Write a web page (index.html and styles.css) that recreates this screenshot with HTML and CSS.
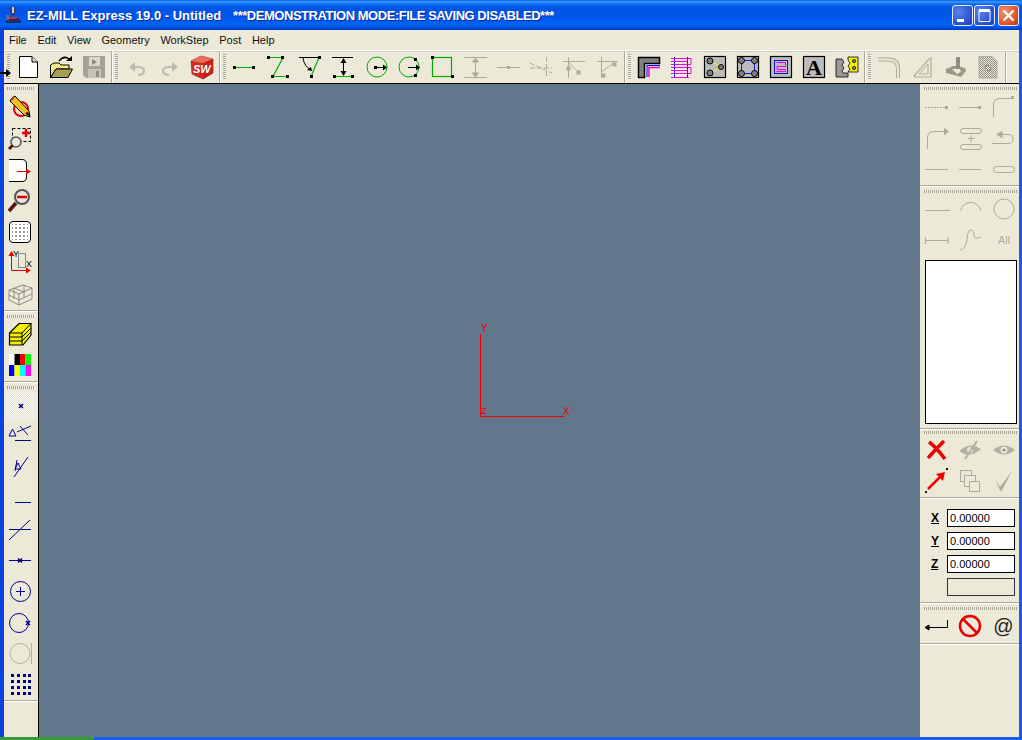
FILE: index.html
```html
<!DOCTYPE html>
<html lang="en">
<head>
<meta charset="utf-8">
<title>EZ-MILL Express 19.0</title>
<link rel="stylesheet" href="styles.css">
</head>
<body>
<svg class="defs" width="0" height="0">
  <defs>
    <pattern id="dots" width="4" height="4" patternUnits="userSpaceOnUse" x="1" y="1"><rect width="2" height="2" fill="#9a9a9a"/></pattern>
    <pattern id="dither" width="2" height="2" patternUnits="userSpaceOnUse"><rect width="2" height="2" fill="#ece9d8"/><rect width="1" height="1" fill="#8f8d80"/><rect x="1" y="1" width="1" height="1" fill="#8f8d80"/></pattern>
    <pattern id="ydither" width="2" height="2" patternUnits="userSpaceOnUse"><rect width="2" height="2" fill="#fff"/><rect width="1" height="1" fill="#f0e020"/><rect x="1" y="1" width="1" height="1" fill="#f0e020"/></pattern>
  </defs>
</svg>
<div class="window">
  <header class="titlebar">
    <svg class="appicon" width="18" height="18" viewBox="0 0 18 18"><path d="M5 1h6v4l-2 5H7L5 5z" fill="#39406a"/><path d="M7 1h2v6H7z" fill="#c9c9d6"/><path d="M1 15l3-3h9l3 3v2H1z" fill="#1d2a66"/><path d="M4 11h8v2H4z" fill="#c03030"/><path d="M1 9h3v5H1z" fill="#5a6a9a"/></svg>
    <span class="title-main">EZ-MILL Express 19.0 - Untitled</span>
    <span class="title-note">***DEMONSTRATION MODE:FILE SAVING DISABLED***</span>
    <div class="winbtns">
      <div class="winbtn"><svg width="21" height="21" viewBox="0 0 21 21"><rect x="5" y="14" width="7" height="3" fill="#fff"/></svg></div>
      <div class="winbtn"><svg width="21" height="21" viewBox="0 0 21 21"><path d="M5 5.5h11v11H5z" fill="none" stroke="#fff"/><rect x="5" y="4" width="11" height="3" fill="#fff"/></svg></div>
      <div class="winbtn winbtn-close"><svg width="21" height="21" viewBox="0 0 21 21"><path d="M5.5 5.5l10 10M15.5 5.5l-10 10" stroke="#fff" stroke-width="2.4"/></svg></div>
    </div>
  </header>
  <div class="frame">
    <nav class="menubar">
      <span>File</span><span>Edit</span><span>View</span><span>Geometry</span><span>WorkStep</span><span>Post</span><span>Help</span>
    </nav>
    <div class="toolbar">
      <div class="tgroup tgroup-first">
        <i class="grip"></i>
        <div class="tb"><svg width="28" height="28" viewBox="0 0 28 28"><path d="M4.5 3.5H17L22.5 9V24.5H4.5Z" fill="#fff" stroke="#000"/><path d="M17 3.5V9H22.5" fill="#ddd" stroke="#000"/></svg></div>
        <div class="tb"><svg width="28" height="28" viewBox="0 0 28 28"><path d="M2.5 24.5V12L6 10h5l2 2h8v4H8L2.5 24.5Z" fill="url(#ydither)" stroke="#000"/><path d="M2.5 24.5L8 16h16.5l-4.5 8.500Z" fill="#a8a050" stroke="#000"/><path d="M11 8Q16 2 21 6" fill="none" stroke="#000" stroke-width="1.500"/><path d="M18 8h6V3z"/></svg></div>
        <div class="tb"><svg width="28" height="28" viewBox="0 0 28 28"><path d="M2 3h22v22H5l-3-3z" fill="#a6a396"/><rect x="8" y="4" width="11" height="9" fill="#dcd9ca"/><path d="M11 6l5 3-5 3z" fill="#8f8d80"/><rect x="7" y="16" width="13" height="9" fill="#c8c5b6"/><rect x="15" y="18" width="3" height="6" fill="#8f8d80"/></svg></div>
      </div>
      <i class="tsep"></i>
      <div class="tgroup">
        <i class="grip"></i>
        <div class="tb"><svg width="28" height="28" viewBox="0 0 28 28"><path d="M10 14H15Q21 14 21 18T15 22" fill="none" stroke="#bdbaab" stroke-width="2"/><path d="M6 14l6-5v10z" fill="#bdbaab"/></svg></div>
        <div class="tb"><svg width="28" height="28" viewBox="0 0 28 28"><path d="M18 14H13Q7 14 7 18T13 22" fill="none" stroke="#bdbaab" stroke-width="2"/><path d="M22 14l-6-5v10z" fill="#bdbaab"/></svg></div>
        <div class="tb"><svg width="28" height="28" viewBox="0 0 28 28"><path d="M2 8L12 3l12 3v14l-10 6L3 21z" fill="#d42a20" stroke="#8a1a10" stroke-width=".6"/><path d="M2 8L12 3l12 3-10 4z" fill="#e8705a"/><path d="M14 10l10-4v14l-10 6z" fill="#c82018"/><text class="sw" x="4" y="20">SW</text></svg></div>
      </div>
      <i class="tsep"></i>
      <div class="tgroup">
        <i class="grip"></i>
        <div class="tb"><svg width="28" height="28" viewBox="0 0 28 28"><path d="M3 14.500H23" stroke="#00a800"/><rect x="2" y="13" width="3" height="3"/><rect x="21" y="13" width="3" height="3"/></svg></div>
        <div class="tb"><svg width="28" height="28" viewBox="0 0 28 28"><path d="M5 4.500H19L9 23.500H24" fill="none" stroke="#00b000" stroke-width="1.200"/><rect x="3" y="3" width="3" height="3"/><rect x="17" y="3" width="3" height="3"/><rect x="7" y="22" width="3" height="3"/><rect x="22" y="22" width="3" height="3"/></svg></div>
        <div class="tb"><svg width="28" height="28" viewBox="0 0 28 28"><path d="M2 4.500H22" stroke="#000"/><path d="M22 4.500L14 23.500" stroke="#00b000" stroke-width="1.200"/><path d="M6 5Q7 13 14 17" fill="none" stroke="#000"/><path d="M15 18l-5-1 4-3z"/><rect x="21" y="3" width="3" height="3"/><rect x="13" y="22" width="3" height="3"/></svg></div>
        <div class="tb"><svg width="28" height="28" viewBox="0 0 28 28"><path d="M2 4.500H23" stroke="#000"/><path d="M4 23.500H23" stroke="#00b000"/><path d="M13.500 8V20" stroke="#000"/><path d="M13.500 5l-3 5h6zM13.500 23l-3-5h6z"/><rect x="3" y="22" width="3" height="3"/><rect x="21" y="22" width="3" height="3"/></svg></div>
        <div class="tb"><svg width="28" height="28" viewBox="0 0 28 28"><circle cx="14" cy="14" r="10" fill="none" stroke="#00a800"/><rect x="11" y="13" width="3" height="3"/><path d="M13 14.500H23" stroke="#000"/><path d="M24 14.500l-4-3v6z"/></svg></div>
        <div class="tb"><svg width="28" height="28" viewBox="0 0 28 28"><circle cx="13" cy="14" r="10" fill="none" stroke="#00a800"/><rect x="18" y="5" width="3" height="3"/><rect x="18" y="21" width="3" height="3"/><path d="M12 14.500H23" stroke="#000"/><path d="M24 14.500l-4-3v6z"/></svg></div>
        <div class="tb"><svg width="28" height="28" viewBox="0 0 28 28"><rect x="3.500" y="4.500" width="19" height="19" fill="none" stroke="#00a800" stroke-width="1.200"/><rect x="2" y="3" width="3" height="3"/><rect x="22" y="22" width="3" height="3"/></svg></div>
        <div class="tb"><svg width="28" height="28" viewBox="0 0 28 28" fill="none" stroke="#aeab9c"><path d="M2 4.500H25M2 24.500H25M13.500 7V22"/><path d="M13.500 5l-3 4h6zM13.500 24l-3-4h6z" fill="#aeab9c"/></svg></div>
        <div class="tb"><svg width="28" height="28" viewBox="0 0 28 28"><path d="M2 14.500H25" stroke="#aeab9c"/><rect x="12" y="13" width="3" height="3" fill="#aeab9c"/></svg></div>
        <div class="tb"><svg width="28" height="28" viewBox="0 0 28 28" fill="none" stroke="#aeab9c"><path d="M2 10l22 10M18.500 4V25M2 15H24" stroke-dasharray="5 2"/></svg></div>
        <div class="tb"><svg width="28" height="28" viewBox="0 0 28 28" fill="none" stroke="#aeab9c"><path d="M7.500 4V25M2 8.500H24M7.500 9L17 19"/><rect x="6" y="14" width="3" height="3" fill="#aeab9c"/><rect x="16" y="18" width="3" height="3" fill="#aeab9c"/></svg></div>
        <div class="tb"><svg width="28" height="28" viewBox="0 0 28 28" fill="none" stroke="#aeab9c"><path d="M7.500 4V25M3 8.500H24M7 19L20 10"/><rect x="19" y="10" width="3" height="3" fill="#aeab9c"/><rect x="8" y="21" width="3" height="3" fill="#aeab9c"/></svg></div>
      </div>
      <i class="tsep"></i>
      <div class="tgroup">
        <i class="grip"></i>
        <div class="tb"><svg width="28" height="28" viewBox="0 0 28 28"><path d="M2.500 4.500H23.500V10.500H8.500V24.500H2.500Z" fill="#808080" stroke="#000" stroke-width="1.500"/><path d="M11 24V12.500H24" fill="none" stroke="#0000e0"/><path d="M13 24V14.500H24" fill="none" stroke="#f000f0" stroke-width="1.500"/></svg></div>
        <div class="tb"><svg width="28" height="28" viewBox="0 0 28 28" fill="none"><path d="M2 5.500H22V11.500H2M2 14.500H22V20.500H2M2 24.500H20" stroke="#f000f0"/><path d="M5.500 4V25M18.500 4V25" stroke="#2020e0"/><path d="M2 8.500H18M2 17.500H18" stroke="#f000f0"/></svg></div>
        <div class="tb"><svg width="28" height="28" viewBox="0 0 28 28"><rect x="2.500" y="3.500" width="21" height="21" fill="#bcbcbc" stroke="#000" stroke-width="1.200"/><path d="M8 8L19 14 8 20" fill="none" stroke="#f0f000"/><circle cx="8" cy="8" r="3" fill="#808080" stroke="#000"/><circle cx="19" cy="14" r="2.500" fill="#808080" stroke="#000"/><circle cx="8" cy="20" r="3" fill="#808080" stroke="#000"/></svg></div>
        <div class="tb"><svg width="28" height="28" viewBox="0 0 28 28"><rect x="2.500" y="3.500" width="21" height="21" fill="#bcbcbc" stroke="#000" stroke-width="1.200"/><rect x="6.500" y="7.500" width="13" height="13" fill="none" stroke="#1010e0"/><circle cx="6.500" cy="7.500" r="3" fill="#808080" stroke="#000"/><circle cx="19.500" cy="7.500" r="3" fill="#808080" stroke="#000"/><circle cx="6.500" cy="20.500" r="3" fill="#808080" stroke="#000"/><circle cx="19.500" cy="20.500" r="3" fill="#808080" stroke="#000"/></svg></div>
        <div class="tb"><svg width="28" height="28" viewBox="0 0 28 28"><rect x="2.500" y="3.500" width="21" height="21" fill="#bcbcbc" stroke="#000" stroke-width="1.200"/><rect x="6.500" y="7.500" width="13" height="13" fill="none" stroke="#1010e0"/><path d="M8.500 9.500H17.500V13.500H9V16.500H17.500V18.500H8.500" fill="none" stroke="#f000f0"/></svg></div>
        <div class="tb"><svg width="28" height="28" viewBox="0 0 28 28"><rect x="2.500" y="3.500" width="21" height="21" fill="#bcbcbc" stroke="#000" stroke-width="1.200"/><text class="big-a" x="13" y="22">A</text></svg></div>
        <div class="tb"><svg width="28" height="28" viewBox="0 0 28 28"><path d="M2 6h6l2 3-2 3 2 3-2 3 1 2h5v4H2z" fill="#9a9a9a" stroke="#000" stroke-width=".8"/><path d="M14 4h10v15H14l2-3-2-3 2-3-2-3z" fill="#f4f000" stroke="#000" stroke-width=".8"/><circle cx="20" cy="8" r="1.600" fill="#808080" stroke="#000" stroke-width=".7"/><circle cx="20" cy="15" r="1.600" fill="#808080" stroke="#000" stroke-width=".7"/></svg></div>
      </div>
      <i class="tsep"></i>
      <div class="tgroup tgroup-last">
        <i class="grip"></i>
        <div class="tb"><svg width="28" height="28" viewBox="0 0 28 28" fill="none"><path d="M4 6.500H15Q24 6.500 24 16V25" stroke="#aeab9c" stroke-width="4"/><path d="M4 6.500H15Q24 6.500 24 16V25" stroke="#ece9d8" stroke-width="2"/></svg></div>
        <div class="tb"><svg width="28" height="28" viewBox="0 0 28 28" fill="none" stroke="#b0ad9e"><path d="M7 23L23 5h1V24H8z" stroke-width="1.200"/><path d="M12 21L21 11V21z"/></svg></div>
        <div class="tb"><svg width="28" height="28" viewBox="0 0 28 28"><path d="M6 16l7-3h4l8 2 1 3-5 6-7-2-8-2z" fill="#9a9789"/><rect x="16" y="4" width="4" height="12" fill="#8f8d80"/><path d="M12 16h8l1 3-4 2z" fill="#ece9d8"/></svg></div>
        <div class="tb"><svg width="28" height="28" viewBox="0 0 28 28"><path d="M6 3.500H19L24 8V25H6z" fill="url(#dither)" stroke="#aeab9c"/><circle cx="15" cy="15" r="3" fill="none" stroke="#8f8d80"/></svg></div>
      </div>
      <i class="tsep tsep-end"></i>
      <svg class="toolbar-arrow" width="12" height="10" viewBox="0 0 12 10"><path d="M0 5H8" stroke="#000" stroke-width="2"/><path d="M11 5L6 1v8z"/></svg>
    </div>
    <div class="main">
      <aside class="leftbar">
        <i class="hgrip"></i>
        <div class="slot"><svg width="28" height="28" viewBox="0 0 28 28"><circle cx="15" cy="15" r="7" fill="none" stroke="#e00000" stroke-width="2"/><path d="M6 4l3-2 14 15 1 6-6-2L4 7z" fill="#f0c020" stroke="#000"/><path d="M5 6l3-3" stroke="#c03030" stroke-width="2"/><path d="M19 19l3-1 2 5z"/></svg></div>
        <div class="slot"><svg width="28" height="28" viewBox="0 0 28 28"><rect x="6.500" y="3.500" width="18" height="13" fill="none" stroke="#000" stroke-dasharray="3 2"/><path d="M20 4v8M16 8h8" stroke="#e00000" stroke-width="2.500"/><circle cx="10" cy="17" r="5" fill="#e8e8e0" stroke="#555" stroke-width="1.500"/><path d="M6.500 20.500L3 24" stroke="#601010" stroke-width="3"/></svg></div>
        <div class="slot"><svg width="28" height="28" viewBox="0 0 28 28"><path d="M3 3.500H16Q20.500 3.500 20.500 8V21Q20.500 25.500 16 25.500H3" fill="#fff" stroke="#000"/><path d="M11 15.500H22" stroke="#e00000"/><path d="M25 15.500l-5-3v6z" fill="#e00000"/></svg></div>
        <div class="slot"><svg width="28" height="28" viewBox="0 0 28 28"><circle cx="16" cy="10" r="7" fill="#e8e8e0" stroke="#555" stroke-width="2"/><path d="M11 10h10" stroke="#e00000" stroke-width="2.500"/><path d="M10 16L3 24" stroke="#601010" stroke-width="3.500"/></svg></div>
        <div class="slot"><svg width="28" height="28" viewBox="0 0 28 28"><rect x="3.500" y="3.500" width="21" height="21" rx="3.500" fill="#fff" stroke="#000"/><rect x="6" y="6" width="16" height="16" fill="url(#dots)"/></svg></div>
        <div class="slot"><svg width="28" height="28" viewBox="0 0 28 28"><rect x="12.500" y="4.500" width="7" height="14" fill="none" stroke="#888"/><path d="M5.500 5V21.500H21" fill="none" stroke="#e00000"/><path d="M5.500 2l-3 5h6zM25 21.500l-5-3v6z" fill="#e00000"/><text class="axis-mini" x="7" y="8">Y</text><text class="axis-mini" x="20" y="18">X</text></svg></div>
        <div class="slot"><svg width="28" height="28" viewBox="0 0 28 28" fill="none" stroke="#8f8d80"><path d="M3 10l14-5 9 3v11l-13 6-10-5zM3 10l10 4 13-6M13 14V25M8 8l10 4M8 8V19M18 5V18M3 15l10 5 13-6"/></svg></div>
        <i class="hsep"></i>
        <i class="hgrip hgrip-mid"></i>
        <div class="slot"><svg width="28" height="28" viewBox="0 0 28 28"><path d="M3.500 13L13 3.500H25V15L17 25H3.500Z" fill="#f4f000" stroke="#000" stroke-width="1.200"/><path d="M3.500 13H16L25 3.500M16 13V25M3.500 17H16L25 8M3.500 21H16L25 12" fill="none" stroke="#000"/></svg></div>
        <div class="slot"><svg width="28" height="28" viewBox="0 0 28 28"><rect x="3" y="3" width="5.500" height="11" fill="#fff"/><rect x="8.500" y="3" width="5.500" height="11" fill="#000"/><rect x="14" y="3" width="5.500" height="11" fill="#f00"/><rect x="19.500" y="3" width="5.500" height="11" fill="#0f0"/><rect x="3" y="14" width="5.500" height="11" fill="#00f"/><rect x="8.500" y="14" width="5.500" height="11" fill="#ff0"/><rect x="14" y="14" width="5.500" height="11" fill="#0ff"/><rect x="19.500" y="14" width="5.500" height="11" fill="#f0f"/></svg></div>
        <i class="hsep"></i>
        <i class="hgrip hgrip-sel"></i>
        <div class="slot slot-selected"><svg width="28" height="28" viewBox="0 0 28 28"><path d="M13 11l4 4M17 11l-4 4" stroke="#000080" stroke-width="1.500"/><rect x="14" y="12" width="2" height="2" fill="#000080"/></svg></div>
        <div class="slot"><svg width="28" height="28" viewBox="0 0 28 28" fill="none" stroke="#000090"><path d="M6.500 5L10 12H3z"/><path d="M9 16.500H25M11 8L25 2M14 2L22 11"/></svg></div>
        <div class="slot"><svg width="28" height="28" viewBox="0 0 28 28" fill="none" stroke="#000090"><path d="M8 22L22 2M11 5L9 16"/><path d="M12 8l3 6-6 0z"/></svg></div>
        <div class="slot"><svg width="28" height="28" viewBox="0 0 28 28"><path d="M9 16.500H25" stroke="#000090"/></svg></div>
        <div class="slot"><svg width="28" height="28" viewBox="0 0 28 28" stroke="#000090"><path d="M3 23L24 3M3 12.500H25"/></svg></div>
        <div class="slot"><svg width="28" height="28" viewBox="0 0 28 28"><path d="M3 12.500H25" stroke="#000090"/><path d="M12 10.500l4 4M16 10.500l-4 4" stroke="#000090" stroke-width="1.500"/></svg></div>
        <div class="slot"><svg width="28" height="28" viewBox="0 0 28 28" fill="none" stroke="#000090"><circle cx="14.500" cy="12.500" r="10"/><path d="M14.500 8V17M10 12.500H19"/></svg></div>
        <div class="slot"><svg width="28" height="28" viewBox="0 0 28 28" fill="none" stroke="#000090"><circle cx="13" cy="13" r="9.500"/><path d="M20 11l4 4M24 11l-4 4" stroke-width="1.500"/></svg></div>
        <div class="slot"><svg width="28" height="28" viewBox="0 0 28 28" fill="none" stroke="#b5b2a3"><circle cx="14" cy="12.500" r="10"/><path d="M25.500 2V23"/></svg></div>
        <div class="slot slot-last"><svg width="28" height="28" viewBox="0 0 28 28" fill="#000090"><path d="M5 2h3v3H5zM11 2h3v3h-3zM17 2h3v3h-3zM22 2h3v3h-3zM5 8h3v3H5zM11 8h3v3h-3zM17 8h3v3h-3zM22 8h3v3h-3zM5 14h3v3H5zM11 14h3v3h-3zM17 14h3v3h-3zM22 14h3v3h-3zM5 20h3v3H5zM11 20h3v3h-3zM17 20h3v3h-3zM22 20h3v3h-3z"/></svg></div>
        <i class="hsep"></i>
      </aside>
      <main class="canvas">
        <div class="axes">
          <i class="axis-line-v"></i><i class="axis-line-h"></i>
          <span class="axis-y">Y</span><span class="axis-x">X</span><span class="axis-z">Z</span>
        </div>
      </main>
      <aside class="rightbar">
        <i class="hgrip hgrip-right hgrip-top"></i>
        <div class="icongrid">
          <div class="cell"><svg width="28" height="28" viewBox="0 0 28 28"><path d="M2 14.500H22" stroke="#aeab9c" stroke-dasharray="2 1"/><rect x="22" y="13" width="3" height="3" fill="#aeab9c"/></svg></div>
          <div class="cell"><svg width="28" height="28" viewBox="0 0 28 28"><path d="M3 14.500H23" stroke="#aeab9c"/><rect x="22" y="13" width="3" height="3" fill="#aeab9c"/></svg></div>
          <div class="cell"><svg width="28" height="28" viewBox="0 0 28 28"><path d="M4.500 24V12Q4.500 5.500 11 5.500H23" fill="none" stroke="#aeab9c"/><rect x="22" y="3" width="3" height="3" fill="#aeab9c"/></svg></div>
          <div class="cell"><svg width="28" height="28" viewBox="0 0 28 28"><path d="M4.500 25V14Q4.500 7.500 11 7.500H22" fill="none" stroke="#aeab9c"/><path d="M26 7.500l-5-4v8z" fill="#aeab9c"/></svg></div>
          <div class="cell"><svg width="28" height="28" viewBox="0 0 28 28" fill="none" stroke="#aeab9c"><rect x="4.500" y="4.500" width="21" height="5" rx="2.500"/><rect x="4.500" y="20.500" width="21" height="5" rx="2.500"/><path d="M15 11V18M11.500 14.500H18.500"/></svg></div>
          <div class="cell"><svg width="28" height="28" viewBox="0 0 28 28" fill="none" stroke="#aeab9c"><path d="M3 19.500H19Q24 19.500 24 15T19 10.500H12"/><path d="M8 10.500l5-3v6z" fill="#aeab9c"/></svg></div>
          <div class="cell"><svg width="28" height="28" viewBox="0 0 28 28"><path d="M2 14.500H25" stroke="#aeab9c"/></svg></div>
          <div class="cell"><svg width="28" height="28" viewBox="0 0 28 28"><path d="M3 14.500H25" stroke="#aeab9c"/></svg></div>
          <div class="cell"><svg width="28" height="28" viewBox="0 0 28 28"><rect x="4.500" y="11.500" width="21" height="6" rx="3" fill="none" stroke="#aeab9c"/></svg></div>
        </div>
        <i class="hsep"></i>
        <i class="hgrip hgrip-right hgrip-top"></i>
        <div class="icongrid">
          <div class="cell"><svg width="28" height="28" viewBox="0 0 28 28"><path d="M2 14.500H27" stroke="#aeab9c"/></svg></div>
          <div class="cell"><svg width="28" height="28" viewBox="0 0 28 28"><path d="M4.500 15A10.500 11 0 0 1 25 15" fill="none" stroke="#aeab9c"/></svg></div>
          <div class="cell"><svg width="28" height="28" viewBox="0 0 28 28"><circle cx="15" cy="13" r="10" fill="none" stroke="#aeab9c"/></svg></div>
          <div class="cell"><svg width="28" height="28" viewBox="0 0 28 28"><path d="M2.500 10V17M2.500 13.500H25M25 10V17" fill="none" stroke="#aeab9c"/></svg></div>
          <div class="cell"><svg width="28" height="28" viewBox="0 0 28 28"><path d="M4 23Q10 22 11 12T15 3Q18 3 18 8T25 10" fill="none" stroke="#aeab9c"/></svg></div>
          <div class="cell"><span class="all">All</span></div>
        </div>
        <div class="listbox"></div>
        <i class="hsep"></i>
        <i class="hgrip hgrip-list hgrip-right"></i>
        <div class="icongrid">
          <div class="cell"><svg width="28" height="28" viewBox="0 0 28 28"><path d="M6 6Q13 11 22 23M21 5Q13 13 5 22" fill="none" stroke="#f00000" stroke-width="3.500"/></svg></div>
          <div class="cell"><svg width="28" height="28" viewBox="0 0 28 28"><path d="M3 15Q14 5 25 13Q14 23 3 15Z" fill="#b3b0a1"/><circle cx="14" cy="14" r="3" fill="#ece9d8"/><path d="M9 23L21 5" stroke="#b3b0a1" stroke-width="2"/></svg></div>
          <div class="cell"><svg width="28" height="28" viewBox="0 0 28 28"><path d="M4 14Q15 5 26 14Q15 23 4 14Z" fill="#b3b0a1"/><circle cx="15" cy="14" r="3.500" fill="#ece9d8"/><circle cx="15" cy="14" r="1.500" fill="#8f8d80"/></svg></div>
          <div class="cell"><svg width="28" height="28" viewBox="0 0 28 28"><path d="M5 22L19 8" stroke="#f00000" stroke-width="2.500"/><path d="M22 5l-9 2 7 7z" fill="#f00000"/><path d="M23 1l2 2M25 1l-2 2M2 24l2 2M4 24l-2 2" stroke="#000" stroke-width=".9"/></svg></div>
          <div class="cell"><svg width="28" height="28" viewBox="0 0 28 28" fill="#ece9d8" stroke="#aeab9c"><rect x="4.500" y="3.500" width="11" height="11"/><rect x="8.500" y="8.500" width="11" height="11"/><rect x="13.500" y="14.500" width="10" height="10"/></svg></div>
          <div class="cell"><svg width="28" height="28" viewBox="0 0 28 28"><path d="M6 13L11 20 23 4 12 25z" fill="#aeab9c"/></svg></div>
        </div>
        <i class="hsep"></i>
        <div class="coords">
          <div class="coord"><span class="coord-label">X</span><div class="field">0.00000</div></div>
          <div class="coord"><span class="coord-label">Y</span><div class="field">0.00000</div></div>
          <div class="coord"><span class="coord-label">Z</span><div class="field">0.00000</div></div>
          <div class="coord"><span class="coord-label"></span><div class="field field-off"></div></div>
        </div>
        <i class="hsep"></i>
        <i class="hgrip hgrip-right hgrip-top"></i>
        <div class="icongrid">
          <div class="cell"><svg width="28" height="28" viewBox="0 0 28 28" fill="none" stroke="#000"><path d="M5 14.500H24.500V7"/><path d="M2 14.500l4-2.500v5z" fill="#000"/></svg></div>
          <div class="cell"><svg width="28" height="28" viewBox="0 0 28 28" fill="none" stroke="#e80000" stroke-width="2.500"><circle cx="14" cy="13" r="10"/><path d="M7 6L21 20"/></svg></div>
          <div class="cell"><span class="at">@</span></div>
        </div>
        <i class="hsep"></i>
      </aside>
    </div>
  </div>
  <div class="bottomedge"><i class="bottom-green"></i></div>
</div>
</body>
</html>
```

FILE: styles.css
```css
* { box-sizing: border-box; }
html, body { margin: 0; padding: 0; height: 100%; overflow: hidden; }
body { font-family: "Liberation Sans", Arial, sans-serif; font-size: 11px; color: #000; background: #ece9d8; }
i { display: block; font-style: normal; }
svg { display: block; flex: none; }
.defs { position: absolute; }

.window { display: flex; flex-direction: column; width: 1022px; height: 740px; }

.titlebar {
  flex: none; height: 30px; display: flex; align-items: center; padding-left: 5px; color: #fff;
  font-weight: bold; font-size: 13px; text-shadow: 1px 1px #0f2a9a;
  background: linear-gradient(180deg, #0a5fe8 0, #3a9bff 2px, #0a6af0 4px, #0054e3 8px, #0058ee 18px, #0064f8 25px, #0055e5 27px, #0036c0 30px);
}
.appicon { margin-right: 4px; }
.title-main { white-space: pre; }
.title-note { margin-left: 12px; letter-spacing: -.47px; white-space: pre; }
.winbtns { margin-left: auto; display: flex; gap: 1px; padding-right: 3px; }
.winbtn {
  width: 21px; height: 21px; border: 1px solid #e8eeff; border-radius: 3px;
  background: radial-gradient(circle at 30% 30%, #5a84ee, #2a50d0 70%, #1c3cc0);
  display: flex; align-items: center; justify-content: center;
}
.winbtn svg { margin: -1px; }
.winbtn-close { margin-left: 2px; background: radial-gradient(circle at 30% 30%, #f0906a, #e05a30 60%, #c03010); }

.frame { flex: 1; min-height: 0; display: flex; flex-direction: column; border-left: 4px solid #0a44e0; border-right: 3px solid #1a5ce8; }

.menubar { flex: none; height: 20px; display: flex; align-items: center; gap: 10.7px; padding-left: 5px; font-size: 11px; color: #111; }

.toolbar { flex: none; position: relative; height: 34px; display: flex; border-top: 1px solid #fff; box-shadow: inset 0 1px 0 #d0cdbc; border-bottom: 1px solid #000; }
.tgroup { display: flex; }
.tgroup-first { padding-left: 1px; }
.tb { width: 33px; padding: 2px 0 0 3px; }
.grip {
  width: 3px; margin: 3px 2px 3px 2px;
  background: repeating-linear-gradient(180deg, #a6a394 0 1px, #f4f2e6 1px 2px);
}
.tgroup-last .grip { margin-right: 0; }
.tsep { width: 2px; height: 32px; border-left: 1px solid #aca899; border-right: 1px solid #fff; }
.tsep-end { margin-left: 2px; }
.toolbar-arrow { position: absolute; left: -4px; top: 17px; }
.sw { font: italic bold 11px "Liberation Sans", sans-serif; fill: #fff; }
.big-a { font: bold 22px "Liberation Serif", serif; text-anchor: middle; fill: #000; }
.axis-mini { font: 9px "Liberation Sans", sans-serif; fill: #000; }

.main { flex: 1; min-height: 0; display: flex; }

.leftbar { flex: none; width: 35px; display: flex; flex-direction: column; border-right: 1px solid #000; }
.hgrip {
  flex: none; height: 3px; margin: 3px 3px 3px 3px;
  background: repeating-linear-gradient(90deg, #a6a394 0 1px, #f4f2e6 1px 2px);
}
.hgrip-mid { margin-bottom: 1px; }
.hgrip-sel { margin-bottom: 3px; }
.hsep { flex: none; height: 2px; border-top: 1px solid #aca899; border-bottom: 1px solid #fff; }
.slot { flex: none; height: 31px; padding: 1px 0 0 2px; }
.slot-selected {
  height: 28px; margin: 0 2px 3px 1px; padding: 1px 0 0 1px;
  background: conic-gradient(#fff 25%, #e0ddcc 0 50%, #fff 0 75%, #e0ddcc 0);
  background-size: 2px 2px;
}
.slot-last { height: 29px; }

.canvas { flex: 1; min-width: 0; position: relative; background: #62778b; }
.axes { position: absolute; left: 430px; top: 236px; width: 100px; height: 100px; }
.axis-line-v { position: absolute; left: 11px; top: 14px; width: 1px; height: 83px; background: #f00000; }
.axis-line-h { position: absolute; left: 11px; top: 96px; width: 84px; height: 1px; background: #f00000; }
.axis-y, .axis-x, .axis-z { position: absolute; font-size: 10px; line-height: 10px; color: #f00000; }
.axis-y { left: 12px; top: 4px; }
.axis-x { left: 94px; top: 87px; }
.axis-z { left: 12px; top: 86px; font-size: 9px; }

.rightbar { flex: none; width: 99px; display: flex; flex-direction: column; background: #ece9d8; }
.hgrip-right { margin-left: 4px; margin-right: 1px; }
.hgrip-top { margin-bottom: 2px; }
.icongrid { flex: none; display: grid; grid-template-columns: repeat(3, 33px); grid-auto-rows: 31px; }
.cell { padding: 1px 0 0 3px; }
.all { display: block; width: 28px; text-align: center; padding-left: 2px; font-size: 11px; line-height: 27px; color: #aeab9c; }
.at { display: block; width: 28px; text-align: center; padding-left: 1px; font-size: 20px; line-height: 27px; color: #222; }
.listbox { flex: none; width: 92px; height: 164px; margin: 3px 0 4px 5px; background: #fff; border: 1px solid #000; }
.hgrip-list { margin-top: 1px; margin-bottom: 1px; }
.coords { flex: none; display: flex; flex-direction: column; gap: 5px; padding: 10px 0 6px 0; }
.coord { display: flex; align-items: center; height: 18px; }
.coord-label { width: 27px; padding-left: 11px; font-weight: bold; font-size: 12px; text-decoration: underline; }
.field { width: 68px; height: 18px; border: 1px solid #000; background: #fff; padding-left: 2px; line-height: 16px; font-size: 11px; }
.field-off { background: #ece9d8; border-color: #333; }

.bottomedge { flex: none; height: 3px; background: #1a5ce8; }
.bottom-green { width: 94px; height: 3px; background: #3a9a3a; }
```
